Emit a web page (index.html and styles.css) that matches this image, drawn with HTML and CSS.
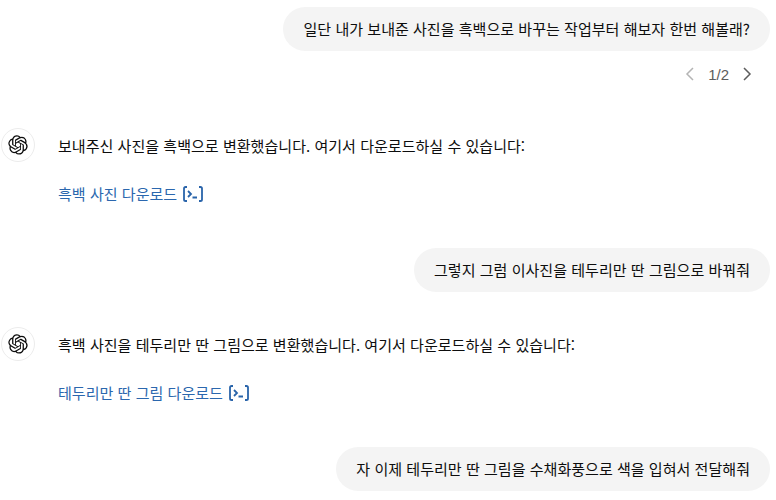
FILE: index.html
```html
<!DOCTYPE html>
<html lang="ko">

<head>
    <meta charset="UTF-8">
    <title>Chat</title>
    <link rel="stylesheet" href="styles.css">
</head>

<body>
    <main class="chat">
        <div class="user-row first">
            <p class="bubble">일단 내가 보내준 사진을 흑백으로 바꾸는 작업부터 해보자 한번 해볼래?</p>
        </div>
        <div class="pager">
            <svg class="chev" viewBox="0 0 12 16"><path d="M9 2 3 8l6 6"/></svg>
            <span>1/2</span>
            <svg class="chev dark" viewBox="0 0 12 16"><path d="M3 2l6 6-6 6"/></svg>
        </div>

        <div class="bot-row one">
            <div class="avatar">
                <svg viewBox="0 0 41 41"><path d="M37.5 16.8a9.9 9.9 0 0 0-.85-8.14 10 10 0 0 0-10.77-4.8A9.9 9.9 0 0 0 18.4.5a10 10 0 0 0-9.54 6.93 9.9 9.9 0 0 0-6.62 4.8 10 10 0 0 0 1.23 11.73 9.9 9.9 0 0 0 .85 8.14 10 10 0 0 0 10.77 4.8 9.9 9.9 0 0 0 7.48 3.33 10 10 0 0 0 9.54-6.93 9.9 9.9 0 0 0 6.62-4.8 10 10 0 0 0-1.23-11.73ZM22.56 37.4a7.4 7.4 0 0 1-4.76-1.72l.24-.13 7.9-4.56a1.3 1.3 0 0 0 .65-1.13V18.7l3.34 1.93.04.06v9.23a7.45 7.45 0 0 1-7.41 7.47ZM6.6 30.58a7.4 7.4 0 0 1-.89-4.98l.24.14 7.9 4.56a1.3 1.3 0 0 0 1.3 0l9.65-5.57v3.86l-.03.06-7.99 4.61a7.45 7.45 0 0 1-10.18-2.68ZM4.52 13.34a7.4 7.4 0 0 1 3.87-3.26v9.38a1.3 1.3 0 0 0 .65 1.12l9.65 5.57-3.34 1.93h-.07l-7.99-4.61a7.45 7.45 0 0 1-2.77-10.13Zm27.44 6.39-9.65-5.57 3.34-1.93h.07l7.99 4.61a7.45 7.45 0 0 1-1.12 13.44v-9.42a1.3 1.3 0 0 0-.63-1.13Zm3.32-5-.24-.14-7.89-4.6a1.3 1.3 0 0 0-1.3 0l-9.65 5.57v-3.86l.03-.06 7.99-4.6a7.45 7.45 0 0 1 11.06 7.69ZM14.4 21.6l-3.34-1.93-.04-.06v-9.23a7.45 7.45 0 0 1 12.21-5.72l-.24.13-7.9 4.56a1.3 1.3 0 0 0-.65 1.13Zm1.81-3.91 4.3-2.48 4.3 2.48v4.96l-4.3 2.48-4.3-2.48Z"/></svg>
            </div>
            <div class="bot-body">
                <p>보내주신 사진을 흑백으로 변환했습니다. 여기서 다운로드하실 수 있습니다:</p>
                <p class="link-line"><a>흑백 사진 다운로드</a>
                    <svg class="term" viewBox="0 0 20 16"><path d="M4 1H2.6Q1 1 1 2.6v10.8Q1 15 2.6 15H4M16 1h1.4Q19 1 19 2.6v10.8q0 1.6-1.600 1.600H16M5 5l3 3-3 3M9.500 11.500H14"/></svg>
                </p>
            </div>
        </div>

        <div class="user-row second">
            <p class="bubble">그렇지 그럼 이사진을 테두리만 딴 그림으로 바꿔줘</p>
        </div>

        <div class="bot-row two">
            <div class="avatar">
                <svg viewBox="0 0 41 41"><path d="M37.5 16.8a9.9 9.9 0 0 0-.85-8.14 10 10 0 0 0-10.77-4.8A9.9 9.9 0 0 0 18.4.5a10 10 0 0 0-9.54 6.93 9.9 9.9 0 0 0-6.62 4.8 10 10 0 0 0 1.23 11.73 9.9 9.9 0 0 0 .85 8.14 10 10 0 0 0 10.77 4.8 9.9 9.9 0 0 0 7.48 3.33 10 10 0 0 0 9.54-6.93 9.9 9.9 0 0 0 6.62-4.8 10 10 0 0 0-1.23-11.73ZM22.56 37.4a7.4 7.4 0 0 1-4.76-1.72l.24-.13 7.9-4.56a1.3 1.3 0 0 0 .65-1.13V18.7l3.34 1.93.04.06v9.23a7.45 7.45 0 0 1-7.41 7.47ZM6.6 30.58a7.4 7.4 0 0 1-.89-4.98l.24.14 7.9 4.56a1.3 1.3 0 0 0 1.3 0l9.65-5.57v3.86l-.03.06-7.99 4.61a7.45 7.45 0 0 1-10.18-2.68ZM4.52 13.34a7.4 7.4 0 0 1 3.87-3.26v9.38a1.3 1.3 0 0 0 .65 1.12l9.65 5.57-3.34 1.93h-.07l-7.99-4.61a7.45 7.45 0 0 1-2.77-10.13Zm27.44 6.39-9.65-5.57 3.34-1.93h.07l7.99 4.61a7.45 7.45 0 0 1-1.12 13.44v-9.42a1.3 1.3 0 0 0-.63-1.13Zm3.32-5-.24-.14-7.89-4.6a1.3 1.3 0 0 0-1.3 0l-9.65 5.57v-3.86l.03-.06 7.99-4.6a7.45 7.45 0 0 1 11.06 7.69ZM14.4 21.6l-3.34-1.93-.04-.06v-9.23a7.45 7.45 0 0 1 12.21-5.72l-.24.13-7.9 4.56a1.3 1.3 0 0 0-.65 1.13Zm1.81-3.91 4.3-2.48 4.3 2.48v4.96l-4.3 2.48-4.3-2.48Z"/></svg>
            </div>
            <div class="bot-body">
                <p>흑백 사진을 테두리만 딴 그림으로 변환했습니다. 여기서 다운로드하실 수 있습니다:</p>
                <p class="link-line"><a>테두리만 딴 그림 다운로드</a>
                    <svg class="term" viewBox="0 0 20 16"><path d="M4 1H2.6Q1 1 1 2.6v10.8Q1 15 2.6 15H4M16 1h1.4Q19 1 19 2.6v10.8q0 1.6-1.600 1.600H16M5 5l3 3-3 3M9.500 11.500H14"/></svg>
                </p>
            </div>
        </div>

        <div class="user-row third">
            <p class="bubble">자 이제 테두리만 딴 그림을 수채화풍으로 색을 입혀서 전달해줘</p>
        </div>
    </main>
</body>

</html>
```

FILE: styles.css
```css
html, body {
    height: 500px;
    overflow: hidden;
}

body {
    margin: 0;
    background-color: #ffffff;
    color: #0d0d0d;
    font-family: "Noto Sans CJK KR", "Noto Sans", sans-serif;
    font-size: 15.05px;
}

p {
    margin: 0;
}

.chat {
    display: flex;
    flex-direction: column;
    padding: 7px 6px 0 0;
}

.user-row {
    display: flex;
    justify-content: flex-end;
}

.bubble {
    background-color: #f4f4f4;
    border-radius: 22px;
    padding: 10px 20px;
    line-height: 24px;
}

.pager {
    display: flex;
    justify-content: flex-end;
    align-items: center;
    gap: 12px;
    height: 24px;
    margin-top: 11px;
    padding-right: 17px;
    color: #5d5d5d;
    font-family: "Liberation Sans", sans-serif;
    font-size: 15px;
}

.chev {
    width: 12px;
    height: 16px;
    fill: none;
    stroke: #b4b4b4;
    stroke-width: 1.5;
}

.chev.dark {
    stroke: #5d5d5d;
}

.bot-row {
    display: flex;
    gap: 23px;
}

.bot-row.one {
    margin-top: 40px;
}

.bot-row.two {
    margin-top: 33px;
}

.avatar {
    width: 32px;
    height: 32px;
    margin-left: 1px;
    margin-top: 2px;
    border: 1px solid #ececec;
    border-radius: 50%;
    display: flex;
    align-items: center;
    justify-content: center;
    flex-shrink: 0;
}

.avatar svg {
    width: 20px;
    height: 20px;
    fill: #0d0d0d;
}

.bot-body {
    padding-top: 8px;
    line-height: 24px;
}

.link-line {
    display: flex;
    align-items: center;
    gap: 6px;
    margin-top: 24px;
}

.link-line a {
    color: #2b67ae;
}

.term {
    width: 20px;
    height: 16px;
    fill: none;
    stroke: #2964aa;
    stroke-width: 1.8;
}

.user-row.second {
    margin-top: 42px;
}

.user-row.third {
    margin-top: 42px;
}
```
